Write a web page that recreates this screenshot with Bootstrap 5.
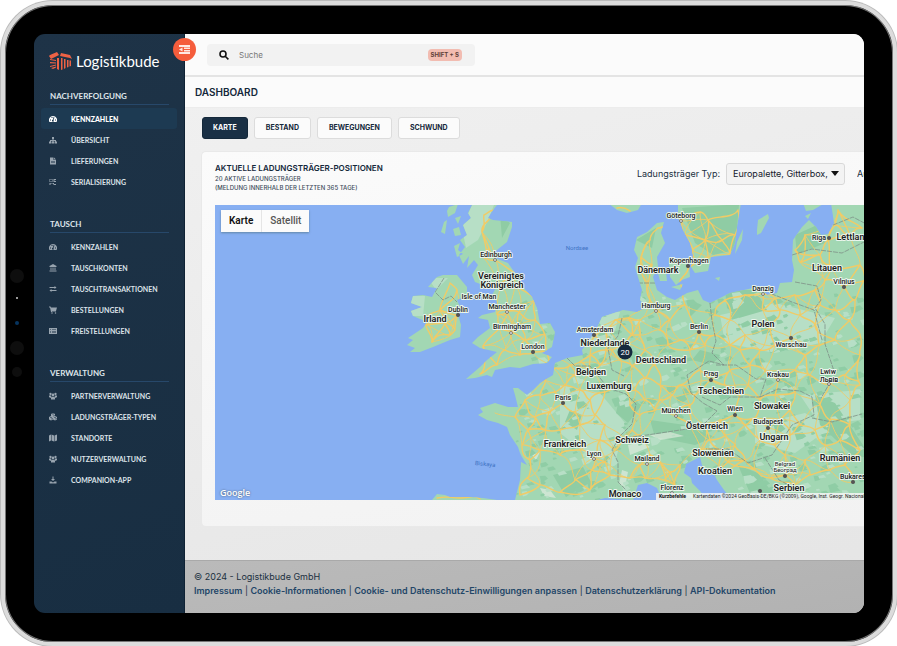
<!DOCTYPE html>
<html lang="de">
<head>
<meta charset="utf-8">
<meta name="viewport" content="width=device-width, initial-scale=1">
<title>Logistikbude – Dashboard</title>
<link rel="stylesheet" href="https://cdn.jsdelivr.net/npm/bootstrap@5.3.0/dist/css/bootstrap.min.css">
<style>
body{background:#fff;font-family:Inter,"Liberation Sans",sans-serif;font-size:10px;line-height:14px;color:#20303f}
.device{min-height:calc(100vh - 1px);margin:1px 0 0 1px;border:4px solid #dcdcdc;border-radius:52px;background:#000;padding:29px;box-shadow:inset 0 0 0 1px #777,0 0 0 1px #bbb}
.screen{border-radius:11px;overflow:hidden}
.sensors{left:4px;top:264px;width:16px}
.lens{width:14px;height:14px;border-radius:50%;background:#0e0e0e}
.lens-sm{width:10px;height:10px;margin-top:12px}
.led{width:2px;height:2px;background:#999;margin:14px 0 22px}
.led-blue{width:4px;height:4px;border-radius:50%;background:#06345f;margin-bottom:16px}
.side{width:151px;background:linear-gradient(160deg,#1e3347,#182e42);border-right:1px solid #0f2234;color:#dfe5ea;padding-top:16px;font-family:Lato,"Liberation Sans",sans-serif}
.brand{color:#fff;font-size:15px;line-height:20px;gap:3px;padding-left:15px;margin-bottom:18px;height:22px}
.side-title{font-size:8px;line-height:12px;font-weight:700;margin:0 15px 3px 16px;padding-bottom:2px;border-bottom:1px solid #27486a}
.side-sec{margin-bottom:26px}
.side-link{height:21px;margin:0 7px;padding-left:8px;gap:13px;font-size:7px;font-weight:700;color:#dde3e9;text-decoration:none;border-radius:3px}
.side-link svg{width:8px;height:8px;margin-right:1px;fill:#98a4af}
.side-link.current{background:#1d3a52;color:#fff;font-weight:900}
.side-link.current svg{fill:#fff}
.toggle{left:139px;top:4px;width:23px;height:23px;border-radius:50%;background:#f55d3c;z-index:3}
.content-col{background:linear-gradient(165deg,#f1f1f1,#e5e5e5)}
.topbar{height:43px;background:#fbfbfb;border-bottom:2px solid #e4e4e4;padding-left:22px}
.search{width:268px;height:22px;background:#f2f2f2;border-radius:4px;padding:0 13px 0 12px;gap:10px}
.search input{font-size:8px;color:#777;outline:0}
.search input::placeholder{color:#777}
.keycap{background:#f2bcb1;color:#5d4038;font-size:6px;line-height:12px;font-weight:700;border-radius:4px;padding:0 3px}
.titlebar{height:31px;background:#fbfbfb;border-bottom:1px solid #ececec;padding-left:10px}
.titlebar h1{font-size:10px;line-height:14px;font-weight:600;color:#14283a}
.tabs{gap:6px;padding:9px 0 12px 17px}
.tab{height:22px;border:1px solid #dcdcdc;border-radius:3px;background:#fbfbfb;padding:0 11px;font-size:7px;font-weight:700;color:#14283a}
.tab.current{background:#1a3045;border-color:#14283a;color:#fff;padding:0 10px}
.panel{background:linear-gradient(170deg,#fbfbfb,#f2f2f2);border:1px solid #e9e9e9;border-right:0;border-radius:5px 0 0 5px;margin-left:16px;padding:10px 0 26px 13px}
.panel-head{height:43px}
.panel-head h2{font-size:8px;line-height:12px;font-weight:600;color:#14283a}
.panel-head p{font-size:6px;line-height:9px;font-weight:500;color:#3d4c5a}
.filters{gap:6px;font-size:9px;padding-top:1px;white-space:nowrap}
.filters select{width:119px;height:22px;appearance:none;font-size:9px;border:1px solid #d8d8d8;border-radius:3px;background:#f3f3f3;padding:0 14px 0 6px;color:#14202c}
.caret{right:6px;top:8px}
.cut{width:7px;margin-left:6px}
.map{height:295px;background:#87aff2}
.map text{font-family:Roboto,sans-serif;paint-order:stroke;stroke:#e9f5ec;stroke-width:2px;stroke-linejoin:round;text-anchor:middle;fill:#222}
.city{font-size:7px;font-weight:500}
.land-name{font-size:9px;font-weight:600}
.map .minor-city{font-size:6px;font-weight:400}
.map .sea-name{font-size:6px;fill:#3f73c4;stroke:none}
.map-type{left:6px;top:5px;height:22px;box-shadow:0 1px 2px #4668}
.map-type button{border:0;background:#fbfbfb;font:500 10px/22px Roboto,sans-serif;padding:0 8px;color:#555}
.map-type button.current{color:#111;font-weight:600;border-right:1px solid #e5e5e5}
.map-logo{left:5px;bottom:-1px;color:#fff;font:600 9px/16px "Open Sans",sans-serif;text-shadow:0 0 2px #456}
.map-credit{left:441px;right:0;bottom:0;font:5px/7px Roboto,sans-serif;color:#222;background:#f4f4f4d9;white-space:nowrap;gap:7px;padding-left:3px}
.map-credit a{color:#111;font-weight:700;text-decoration:none}
.foot{background:linear-gradient(170deg,#bababa,#b2b2b2);border-top:1px solid #a9a9a9;padding:9px 9px 15px;font-size:9px;white-space:nowrap}
.foot a{color:#234668;font-weight:600;text-decoration:none}
</style>
</head>
<body>
<svg class="d-none">
<symbol id="i-gauge" viewBox="0 0 16 16"><path fill-rule="evenodd" d="M8 2a8 8 0 0 0-7 12h14A8 8 0 0 0 8 2M2 9h2v2H2zm3-5h2v2H5zm7 5h2v2h-2zM9 4l2 1-2 5 1 3H6V10l2-1z"/></symbol>
<symbol id="i-tree" viewBox="0 0 16 16"><path d="M6 2h4v4H9v2h5v3h2v4h-5v-4h1v-1H9v1h1v4H6v-4h1v-1H4v1h1v4H0v-4h2V8h5V6H6z"/></symbol>
<symbol id="i-file" viewBox="0 0 16 16"><path fill-rule="evenodd" d="M2 1h7v5h5v9H2zm8 0 4 4h-4zM4 8v1h8V8zm0 3v1h8v-1z"/></symbol>
<symbol id="i-code" viewBox="0 0 16 16"><path fill-rule="evenodd" d="M1 2h6v6H1zm1 1v4h4V3zM9 2h5v2h-3v2h3v2H9zM1 10h5v1H3v3H1zm6 0h3v2h4v2H9v-2H7z"/></symbol>
<symbol id="i-bank" viewBox="0 0 16 16"><path d="m8 0 7 4v2H1V4zM3 7h2v5H3zm4 0h2v5H7zm4 0h2v5h-2zM1 13h14v2H1z"/></symbol>
<symbol id="i-swap" viewBox="0 0 16 16"><path d="M1 4h10V2l4 3-4 3V6H1zm14 6H5V8l-4 3 4 3v-2h10z"/></symbol>
<symbol id="i-cart" viewBox="0 0 16 16"><path d="M0 1h3l1 2h12l-2 7H6v1h8v1H4L2 3H0z"/><circle cx="6" cy="14" r="1.5"/><circle cx="13" cy="14" r="1.5"/></symbol>
<symbol id="i-table" viewBox="0 0 16 16"><path fill-rule="evenodd" d="M0 2h16v12H0zm2 3v1h2V5zm4 0v1h8V5zM2 8v1h2V8zm4 0v1h8V8zm-4 3v1h2v-1zm4 0v1h8v-1z"/></symbol>
<symbol id="i-users" viewBox="0 0 16 16"><circle cx="3" cy="4" r="2.3"/><circle cx="13" cy="4" r="2.3"/><circle cx="8" cy="6" r="2.8"/><path d="M0 7h4l1 3-2 2-3-2zm16 0h-4l-1 3 2 2 3-2zM4 11q4-3 8 0v4H4z"/></symbol>
<symbol id="i-cubes" viewBox="0 0 16 16"><path fill-rule="evenodd" d="m8 0 4 2v4l4 2v5l-4 2-4-2-4 2-4-2V8l4-2V2zm0 1L6 2l2 1 2-1zM9 7l2-1V4L9 5zM2 9l2 1 2-1-2-1zm8 0 2 1 2-1-2-1zm-5 4 2-1v-2l-2 1zm8 0 2-1v-2l-2 1z"/></symbol>
<symbol id="i-map" viewBox="0 0 16 16"><path d="m0 3 4-2v12l-4 2zm5-2 5 2v12l-5-2zm6 2 5-2v12l-5 2z"/></symbol>
<symbol id="i-down" viewBox="0 0 16 16"><path d="M7 1h2v5h3L8 10 4 6h3zM1 11h4l3 2 3-2h4v4H1z"/></symbol>
</svg>

<div class="device d-flex position-relative">
  <div class="sensors position-absolute d-flex flex-column align-items-center">
    <span class="lens"></span><span class="led"></span><span class="led-blue"></span><span class="lens"></span><span class="lens lens-sm"></span>
  </div>
  <div class="screen d-flex flex-fill position-relative">
    <button class="toggle position-absolute border-0 p-0 d-flex align-items-center justify-content-center" type="button" aria-label="Menü einklappen">
      <svg width="11" height="9" viewBox="0 0 11 9" fill="#ffe9e3"><path d="M0 0h11v2H0zm5 2.600h6v1.400H5zm0 2.400h6v1.400H5zM0 7h11v2H0zM3.500 2.500v4L0 4.500z"/></svg>
    </button>
    <aside class="side flex-shrink-0">
      <div class="brand d-flex align-items-center">
        <svg width="24" height="18" viewBox="0 0 24 18" fill="#ee6245"><path d="M1 3 8 0l2 3-8 4-2-3zm11-2 9 2 2 4-2-1-10-2zM1 7l6 1v1L1 8zm0 3 6 .500v1L1 11.200zm0 4 6-1.500v1L1 15zm1 2 5-1.500v1L4 17zM8 6h2v12l-2-1zm4 0h1.500v11.500L12 18zm3 1h1.500v9L15 17zm3 1h1.500v7L18 15.600zm2.500.500H22V14l-1.500.500z"/></svg>
        <span>Logistikbude</span>
      </div>
      <nav>
        <section class="side-sec">
          <h2 class="side-title">NACHVERFOLGUNG</h2>
          <a class="side-link current d-flex align-items-center" href="#"><svg><use href="#i-gauge"/></svg>KENNZAHLEN</a>
          <a class="side-link d-flex align-items-center" href="#"><svg><use href="#i-tree"/></svg>ÜBERSICHT</a>
          <a class="side-link d-flex align-items-center" href="#"><svg><use href="#i-file"/></svg>LIEFERUNGEN</a>
          <a class="side-link d-flex align-items-center" href="#"><svg><use href="#i-code"/></svg>SERIALISIERUNG</a>
        </section>
        <section class="side-sec">
          <h2 class="side-title">TAUSCH</h2>
          <a class="side-link d-flex align-items-center" href="#"><svg><use href="#i-gauge"/></svg>KENNZAHLEN</a>
          <a class="side-link d-flex align-items-center" href="#"><svg><use href="#i-bank"/></svg>TAUSCHKONTEN</a>
          <a class="side-link d-flex align-items-center" href="#"><svg><use href="#i-swap"/></svg>TAUSCHTRANSAKTIONEN</a>
          <a class="side-link d-flex align-items-center" href="#"><svg><use href="#i-cart"/></svg>BESTELLUNGEN</a>
          <a class="side-link d-flex align-items-center" href="#"><svg><use href="#i-table"/></svg>FREISTELLUNGEN</a>
        </section>
        <section>
          <h2 class="side-title">VERWALTUNG</h2>
          <a class="side-link d-flex align-items-center" href="#"><svg><use href="#i-users"/></svg>PARTNERVERWALTUNG</a>
          <a class="side-link d-flex align-items-center" href="#"><svg><use href="#i-cubes"/></svg>LADUNGSTRÄGER-TYPEN</a>
          <a class="side-link d-flex align-items-center" href="#"><svg><use href="#i-map"/></svg>STANDORTE</a>
          <a class="side-link d-flex align-items-center" href="#"><svg><use href="#i-users"/></svg>NUTZERVERWALTUNG</a>
          <a class="side-link d-flex align-items-center" href="#"><svg><use href="#i-down"/></svg>COMPANION-APP</a>
        </section>
      </nav>
    </aside>
    <div class="content-col d-flex flex-column flex-fill overflow-hidden">
      <header class="topbar d-flex align-items-center">
        <label class="search d-flex align-items-center">
          <svg width="10" height="10" viewBox="0 0 10 10" fill="none" stroke="#111" stroke-width="1.600"><circle cx="4" cy="4" r="3"/><path d="m6.200 6.200 3.200 3.200"/></svg>
          <input class="border-0 bg-transparent p-0 flex-fill" type="search" placeholder="Suche" aria-label="Suche">
          <span class="keycap">SHIFT + S</span>
        </label>
      </header>
      <div class="titlebar d-flex align-items-center"><h1 class="m-0">DASHBOARD</h1></div>
      <div class="tabs d-flex">
        <button class="tab current" type="button">KARTE</button>
        <button class="tab" type="button">BESTAND</button>
        <button class="tab" type="button">BEWEGUNGEN</button>
        <button class="tab" type="button">SCHWUND</button>
      </div>
      <main class="panel">
        <div class="panel-head d-flex">
          <div><h2 class="m-0">AKTUELLE LADUNGSTRÄGER-POSITIONEN</h2>
            <p class="m-0">20 AKTIVE LADUNGSTRÄGER<br>(MELDUNG INNERHALB DER LETZTEN 365 TAGE)</p></div>
          <div class="filters d-flex ms-auto align-items-start">
            <label class="pt-1" for="typ">Ladungsträger Typ:</label>
            <div class="position-relative">
              <select id="typ"><option>Europalette, Gitterbox,</option></select>
              <svg class="caret position-absolute" width="8" height="5"><path d="M0 0h8L4 5z" fill="#111"/></svg>
            </div>
            <span class="cut overflow-hidden pt-1">Au</span>
          </div>
        </div>
        <div class="map position-relative overflow-hidden">
          <svg class="d-block" width="100%" height="295" role="img" aria-label="Europakarte">
            <defs>
              <path id="land" d="M472 205 468 213 471 218 463 225 467 235 460 240 465 247 459 255 463 264 469 256 467 268 474 260 478 265 472 275 475 282 483 285 497 286 492 295 497 302 495 312 482 315 478 318 488 320 490 328 478 337 472 343 480 348 497 352 487 360 480 367 466 379 475 378 487 375 492 377 495 370 510 367 520 368 533 364 547 363 552 357 542 353 552 347 555 332 550 323 540 324 537 308 532 297 523 287 515 273 508 263 495 258 485 257 497 250 507 242 512 227 512 222 493 220 488 218 493 210 497 205Z
              M437 277 443 275 457 275 467 287 467 295 457 300 460 307 458 315 461 325 460 337 450 340 433 347 420 352 410 352 415 348 407 345 413 340 408 338 423 328 427 322 413 316 411 311 422 307 411 303 413 296 423 295 432 297 437 288 428 287Z
              M608 203 617 210 627 213 638 210 642 203Z
              M657 223 647 232 637 237 634 250 638 258 635 267 638 277 642 290 640 300 647 307 637 312 623 310 602 317 597 328 588 342 582 350 583 355 567 358 555 363 553 375 540 383 533 390 527 395 518 388 513 388 515 395 518 407 508 407 495 403 480 408 483 412 478 415 487 420 498 423 507 427 510 435 518 447 520 453 522 457 527 465 521 462 520 480 515 500 597 500 605 498 633 500 638 485 647 483 657 488 662 500 707 500 700 491 692 483 691 478 684 473 686 464 700 457 702 465 708 473 712 470 717 480 724 490 732 500 870 500 870 203 831 203 834 223 828 234 821 235 816 227 809 220 802 227 793 240 792 260 794 270 792 282 780 283 777 293 767 295 762 289 753 288 730 293 710 303 703 300 698 290 687 293 675 300 667 297 657 290 653 277 658 267 657 257 665 243 661 233 664 222Z
              M678 203 678 217 683 230 690 243 693 255 691 267 695 273 708 271 711 257 730 255 735 243 737 227 741 203Z
              M669 262 680 261 689 265 690 277 682 280 676 285 670 277Z M658 273 666 272 667 281 660 281Z M671 287 683 284 680 290Z
              M757 230 758 220 768 214 769 218 761 233 757 235Z M735 254 737 242 743 229 742 240Z M715 278 720 277 719 281Z
              M803 203 806 211 813 210 825 203Z M805 216 811 213 808 219Z M432 500 437 494 445 495 450 497 470 497 483 498 497 500Z
              M449 207 458 204 455 213 448 217 447 211Z M444 222 447 220 445 234 441 232Z M453 229 459 227 461 235 455 236Z M454 246 460 243 458 250 463 254 457 257Z M455 218 461 216 458 224Z"/>
              <clipPath id="ground"><use href="#land"/></clipPath>
            </defs>
            <g transform="translate(-215 -205)">
              <use href="#land" fill="#a2d7b3"/>
              <g clip-path="url(#ground)">
                <path fill="#b7dfc6" d="M472 205l22 0-6 15-10 20-12 8-4-20zM428 278l20 0-12 12zM410 296l15 0-2 20-14 0zM560 385l40 8 25 30-10 40-30-10-25-20zM580 312l40 0-8 30-25 5zM720 315l55-12 60 15-15 25-45 10-50-10zM755 425l50-12 25 15-35 25-40-10zM800 395l60-5 0 30-40 5z"/>
                <path fill="#8fcca4" d="M682 208l45-3 12 0-4 45-22 5-18-12zM636 240l20-12-4 20zM795 235l22-10 8 18-28 12zM725 290l30 0 12 20-28 8-12-10zM815 395l20 8 30 45-15 5-30-28zM845 455l30-12 0 15zM700 350l20 5-8 10-20-5zM650 420l35 5 30 12-20 8-40-8zM570 410l12 5-5 15-12-8zM553 475l30-8 8 15-25 15zM500 215l10 8-8 15zM620 395l22 10-14 18-12-10zM738 465l20 8 18 25-24 0zM690 300l12 5-12 12z"/>
                <path fill="#e9eee6" opacity=".6" d="M628 445l14-3 8 5-20 8zM650 435l20-3 14 4-24 4zM540 488l10 2 6 8-12-2zM532 455l8-3-4 8zM622 470l6 2-3 15-6-3z"/>
                <g id="patches"></g>
                <g id="roads" fill="none" stroke="#f1cb66" stroke-linecap="round"></g>
                <path fill="none" stroke="#7f9088" stroke-width=".8" stroke-dasharray="5 1" d="M444 278l-5 8-4 6 8 8 8-4 6 6M567 358l8 8 15 0 10 12 8 10 18 6 10 10-4 20-12 12-8 14 6 12 0 20 8 8M622 318l-4 18-10 12 4 22 12 6M710 303l2 18 4 20-4 12 12 12-15-4-22 14 4 18 12 10 14 8-12 12-18 6-40 6-30 4M716 365l20 0 20 14 10 0-6 18-30 0-10 8-18-8M760 397l18-8 22 2 12 6 2 18-22 10-20 30-24 8-20-14-22 0M822 340l-8-30-22-8-20-8M792 255l20-6 30 4 24-12M795 282l22 4 4 14-6 8 10 16 0 20 10 30-14 24M812 418l20 4 30-8M638 283l18 0M765 458l14 22 24 12-10 8M833 225l20-8 15 8"/>
              </g>
              <g>
                <text class="city" x="681" y="218">Göteborg</text><text class="city" x="496" y="257">Edinburgh</text><text class="land-name" x="501" y="279">Vereinigtes</text><text class="land-name" x="502" y="288">Königreich</text><text class="city" x="479" y="299">Isle of Man</text><text class="city" x="507" y="309">Manchester</text><text class="city" x="458" y="312">Dublin</text><text class="land-name" x="435" y="322">Irland</text><text class="city" x="512" y="329">Birmingham</text><text class="city" x="533" y="349">London</text><text class="city" x="595" y="332">Amsterdam</text><text class="land-name" x="605" y="346">Niederlande</text><text class="land-name" x="591" y="375">Belgien</text><text class="land-name" x="609" y="389">Luxemburg</text><text class="city" x="563" y="400">Paris</text><text class="land-name" x="565" y="447">Frankreich</text><text class="city" x="594" y="456">Lyon</text><text class="land-name" x="632" y="443">Schweiz</text><text class="land-name" x="625" y="497">Monaco</text><text class="city" x="647" y="461">Mailand</text><text class="city" x="672" y="490">Florenz</text><text class="land-name" x="658" y="273">Dänemark</text><text class="city" x="689" y="263">Kopenhagen</text><text class="city" x="656" y="308">Hamburg</text><text class="city" x="699" y="329">Berlin</text><text class="land-name" x="661" y="363">Deutschland</text><text class="city" x="711" y="376">Prag</text><text class="land-name" x="721" y="394">Tschechien</text><text class="city" x="676" y="413">München</text><text class="city" x="735" y="411">Wien</text><text class="land-name" x="707" y="429">Österreich</text><text class="land-name" x="772" y="409">Slowakei</text><text class="city" x="768" y="424">Budapest</text><text class="land-name" x="774" y="440">Ungarn</text><text class="land-name" x="713" y="456">Slowenien</text><text class="land-name" x="715" y="474">Kroatien</text><text class="city minor-city" x="785" y="466">Belgrad</text><text class="city minor-city" x="785" y="472">Београд</text><text class="land-name" x="789" y="491">Serbien</text><text class="land-name" x="840" y="461">Rumänien</text><text class="city" x="854" y="479">Bukarest</text><text class="city" x="763" y="291">Danzig</text><text class="land-name" x="763" y="327">Polen</text><text class="city" x="791" y="347">Warschau</text><text class="city" x="778" y="377">Krakau</text><text class="city" x="828" y="374">Lwiw</text><text class="city" x="829" y="382">Львів</text><text class="city" x="819" y="240">Riga</text><text class="land-name" x="853" y="240">Lettland</text><text class="land-name" x="827" y="271">Litauen</text><text class="city" x="844" y="284">Vilnius</text>
                <text class="sea-name" x="577" y="250">Nordsee</text><text class="sea-name" x="485" y="466" transform="rotate(6 485 465)">Biskaya</text>
              </g>
              <g id="dots" stroke="#555" stroke-width=".8"></g>
              <circle cx="625" cy="352" r="7.500" fill="#152a3e"/>
              <text x="625" y="355" style="fill:#fff;stroke:none;font-size:8px">20</text>
            </g>
          </svg>
          <div class="map-type position-absolute d-flex"><button class="current" type="button">Karte</button><button type="button">Satellit</button></div>
          <div class="map-logo position-absolute">Google</div>
          <div class="map-credit position-absolute d-flex overflow-hidden"><a href="#">Kurzbefehle</a><span>Kartendaten ©2024 GeoBasis-DE/BKG (©2009), Google, Inst. Geogr. Nacional</span></div>
        </div>
      </main>
      <footer class="foot mt-auto">© 2024 - Logistikbude GmbH<br><a href="#">Impressum</a> | <a href="#">Cookie-Informationen</a> | <a href="#">Cookie- und Datenschutz-Einwilligungen anpassen</a> | <a href="#">Datenschutzerklärung</a> | <a href="#">API-Dokumentation</a></footer>
    </div>
  </div>
</div>
<script src="https://cdn.jsdelivr.net/npm/bootstrap@5.3.0/dist/js/bootstrap.bundle.min.js"></script>
<script>
// Junctions of the motorway network, "x,y" in map units
const junctions = `495,260 484,258 484,215 494,210 482,232 489,248 513,272 515,285 500,285 507,312 497,314 519,312 535,300 511,332 500,328 520,325 533,352 545,335 548,352 520,355 505,350 497,365 480,374 525,340 483,346 535,320
458,315 455,330 450,335 432,342 445,322 428,316 426,325 440,310 457,290 450,283
595,336 605,330 615,320 628,318 640,320 655,311 650,300 648,285 652,265 641,257 650,240 658,228 640,270 606,350 590,355 580,362 570,365 575,375 590,370 600,365 612,350 625,345 632,335 620,360 632,366 645,350 640,335 660,330 670,320 685,305 699,332 680,340 668,345 690,350 705,345 715,335 655,365 645,378 660,385 672,395 660,400 645,400 635,390 620,385 605,392 630,405 640,415 655,410 676,416 690,405 680,385 695,395 711,380 700,370 725,385 740,395 730,370 748,385
563,403 555,392 545,380 553,368 565,385 580,390 590,400 575,412 550,412 540,395 525,400 535,417 515,417 495,413 528,430 522,445 545,430 560,430 580,425 595,415 605,425 600,440 594,458 580,450 560,455 540,450 530,460 527,478 520,495 540,485 560,492 575,480 590,490 592,470 605,462 615,450 610,475 625,440 640,435 632,430 650,455 640,465 660,462 670,472 680,465 675,485 665,480 630,478 645,478
690,425 705,425 720,420 735,415 725,435 710,440 700,450 720,450 735,445 728,462 745,460 720,470 745,425 755,418 768,428 780,420 790,410 775,445 760,440 790,435 785,455 785,475 795,485 770,478 755,470 805,460 800,425 815,430 825,445 810,475 830,470 853,482 845,465 860,450 840,440 850,425 830,420 820,405 829,384 845,375 860,385 850,400
763,294 763,310 770,328 791,338 775,345 760,350 745,335 730,320 715,315 725,300 745,295 778,380 765,370 750,365 795,370 810,375 805,355 820,345 835,340 815,325 800,315 820,305 835,310 850,320 860,335 860,355 780,310 795,295 775,298 844,287 825,280 815,290 830,265 800,262 795,250 820,255 828,240 805,235 835,225 838,210 850,235 862,228 860,265 865,280 855,300 760,400 775,395 795,392 740,350 730,345
681,220 685,235 693,250 695,262 708,258 730,254 735,235 738,210 708,220 700,212 705,240 722,240 688,268 680,282 617,208 630,211 437,498 460,498 480,499`.trim().split(/\s+/).map(p => p.split(',').map(Number));
let seed = 7;
const rnd = () => (seed = seed * 16807 % 2147483647) / 2147483647;
let major = '', minor = '';
const done = new Set();
junctions.forEach((a, i) => {
  junctions.map((b, j) => [Math.hypot(a[0] - b[0], a[1] - b[1]), j]).sort((p, q) => p[0] - q[0]).slice(1, 6).forEach(([dist, j], rank) => {
    const key = Math.min(i, j) + '-' + Math.max(i, j);
    if (dist > 32 || done.has(key)) return;
    done.add(key);
    const b = junctions[j], w = dist / 2;
    const dx = (b[0] - a[0]) / 3, dy = (b[1] - a[1]) / 3, p = () => (rnd() - .5) * w;
    const seg = `M${a}C${a[0] + dx + p()},${a[1] + dy + p()} ${b[0] - dx + p()},${b[1] - dy + p()} ${b}`;
    if (rank < 3) major += seg; else minor += seg;
  });
});
document.getElementById('roads').innerHTML = `<path d="${major}" stroke-width="1.400"/><path d="${minor}" stroke-width=".9"/>`;
// Small woodland patches
let woods = '', fields = '';
for (let k = 0; k < 600; k++) {
  const x = 515 + rnd() * 350, y = 290 + rnd() * 210, s = 1 + rnd() * 3;
  const d = `M${x},${y}l${s * 2},${-s * rnd()} ${s},${s} ${-s},${s * rnd()} ${-s * 1.5},${s * .4}z`;
  if (k % 3) woods += d; else fields += d;
}
document.getElementById('patches').innerHTML = `<path d="${woods}" fill="#8fcda5"/><path d="${fields}" fill="#b7dfc6"/>`;
const capitals = [[458,315],[533,352],[594,335],[563,403],[688,266],[699,332],[711,380],[735,415],[768,428],[791,338],[844,287],[829,238],[853,482],[785,476],[760,491]];
const towns = [[495,260],[507,312],[511,333],[594,459],[647,464],[656,311],[676,416],[763,294],[778,380],[829,384],[681,221],[672,493]];
document.getElementById('dots').innerHTML =
  capitals.map(c => `<circle cx="${c[0]}" cy="${c[1]}" r="1.700" fill="#555"/>`).join('') +
  towns.map(c => `<circle cx="${c[0]}" cy="${c[1]}" r="1.400" fill="#fff"/>`).join('');
</script>
</body>
</html>
